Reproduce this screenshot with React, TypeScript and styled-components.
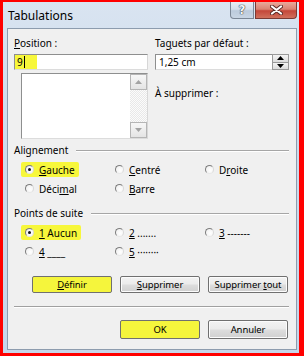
import React from 'react';
import styled, { createGlobalStyle } from 'styled-components';

const Global = createGlobalStyle`
  html, body { margin: 0; padding: 0; }
  body {
    width: 304px; height: 356px; overflow: hidden;
    font-family: "Noto Sans", "DejaVu Sans", sans-serif;
    font-size: 10px; color: #000;
  }
`;

const Outer = styled.div`
  width: 304px; height: 356px; box-sizing: border-box;
  border-style: solid; border-color: #ff0000;
  border-width: 2px 5px 3px 3px;
  background: linear-gradient(180deg, #d9e4f1 0%, #cfdcec 30%, #c6d6ea 100%);
  display: flex; flex-direction: column;
  padding: 0 2px 3px 4px;
`;

const TitleBar = styled.div`
  height: 26px; flex: none;
  display: flex; align-items: flex-start;
`;

const Title = styled.div`
  font-size: 12px; line-height: 16px;
  padding: 6px 0 0 1px; flex: 1;
  color: #000;
`;

const CaptionButtons = styled.div`
  display: flex;
`;

const CaptionButton = styled.div<{ $close?: boolean }>`
  height: 17px;
  width: ${p => (p.$close ? 42 : 24)}px;
  margin-left: ${p => (p.$close ? 1 : 0)}px;
  box-sizing: border-box;
  border: 1px solid ${p => (p.$close ? '#7a3a34' : '#7b8796')};
  border-top: none;
  border-radius: ${p => (p.$close ? '0 0 4px 0' : '0 0 0 4px')};
  background: ${p =>
    p.$close
      ? 'linear-gradient(180deg, #e9a99b 0%, #d98473 45%, #c4473a 55%, #d0705c 100%)'
      : 'linear-gradient(180deg, #e8eef5 0%, #d4dfeb 45%, #bccbdc 55%, #c9d6e4 100%)'};
  display: flex; align-items: center; justify-content: center;
  font-family: "DejaVu Sans", sans-serif; font-weight: bold;
  font-size: 12px;
  color: #f4f6f8;
  text-shadow: 0 0 1px #3a4048, 0 0 1px #3a4048, 0 0 1px #3a4048;
  line-height: 1;
`;

const Panel = styled.div`
  flex: 1;
  box-sizing: border-box;
  border: 1px solid #8d9cae;
  background: #f0f0f0;
  display: flex; flex-direction: column;
  padding: 8px 7px 0 6px;
`;

const TopGrid = styled.div`
  display: grid;
  grid-template-columns: 134px 134px;
  column-gap: 7px;
`;

const Column = styled.div`
  display: flex; flex-direction: column;
`;

const Label = styled.div<{ $gap?: number }>`
  line-height: 13px; height: 13px;
  margin-top: ${p => p.$gap ?? 0}px;
  white-space: nowrap;
`;

const Key = styled.span`
  text-decoration: underline;
  text-underline-offset: 1px;
`;

const TextBox = styled.div`
  margin-top: 4px;
  height: 16px; box-sizing: border-box;
  background: #fff;
  border: 1px solid;
  border-color: #8e8f8f #d7d7d7 #dcdcdc #8e8f8f;
  display: flex; align-items: center;
  line-height: 14px;
`;

const Marked = styled.span`
  background: #f7f73b;
  height: 14px;
  width: 22px;
  display: flex; align-items: center;
  padding-left: 2px; box-sizing: border-box;
`;

const Caret = styled.span`
  width: 1px; height: 12px; background: #000; margin-left: 1px;
`;

const ValueText = styled.span`
  padding-left: 3px; flex: 1;
`;

const Spin = styled.div`
  width: 17px; height: 16px; margin: -1px -1px -1px 0;
  display: flex; flex-direction: column;
`;

const SpinButton = styled.div`
  flex: 1; box-sizing: border-box;
  border: 1px solid #9a9a9a;
  background: linear-gradient(180deg, #f4f4f4, #dcdcdc);
  display: flex; align-items: center; justify-content: center;
  & + & { border-top: none; }
`;

const ListBox = styled.div`
  margin: 3px 0 0 7px;
  height: 66px; box-sizing: border-box;
  background: #fff;
  border: 1px solid;
  border-color: #8e8f8f #d7d7d7 #dcdcdc #8e8f8f;
  display: flex; justify-content: flex-end;
`;

const ScrollBar = styled.div`
  width: 17px;
  display: flex; flex-direction: column; justify-content: space-between;
  background-color: #f3f3f3;
  background-image: repeating-conic-gradient(#e8e8e8 0 25%, #fbfbfb 0 50%);
  background-size: 2px 2px;
`;

const ScrollButton = styled.div`
  height: 16px; box-sizing: border-box;
  border: 1px solid #b5b5b5;
  background: linear-gradient(180deg, #f7f7f7, #e4e4e4);
  display: flex; align-items: center; justify-content: center;
`;

const Group = styled.div<{ $gap: number }>`
  margin-top: ${p => p.$gap}px;
  display: flex; flex-direction: column;
`;

const Legend = styled.div`
  display: flex; align-items: center;
  line-height: 13px; height: 13px;
  &::after {
    content: ""; flex: 1; margin-left: 8px;
    height: 0; border-top: 1px solid #a6a6a6; border-bottom: 1px solid #fff;
  }
`;

const RadioGrid = styled.div`
  margin-top: 3px;
  padding-left: 11px;
  display: grid;
  grid-template-columns: 90px 90px 1fr;
  grid-auto-rows: 19px;
`;

const RadioItem = styled.div<{ $marked?: boolean }>`
  display: flex; align-items: center;
  margin-left: -4px; padding: 0 4px;
  height: 15px; align-self: center;
  justify-self: start;
  background: ${p => (p.$marked ? '#f7f73b' : 'transparent')};
  border-radius: 2px;
  white-space: nowrap;
`;

const RadioCircle = styled.span<{ $on?: boolean }>`
  width: 9px; height: 9px; box-sizing: border-box;
  border-radius: 50%;
  border: 1px solid;
  border-color: #7d7d7d #d8d8d8 #e8e8e8 #7d7d7d;
  background: radial-gradient(circle at 60% 60%, #ffffff 0%, #f2f2f2 70%);
  margin-right: 5px; flex: none;
  display: flex; align-items: center; justify-content: center;
  &::after {
    content: "";
    width: 3px; height: 3px; border-radius: 50%;
    background: ${p => (p.$on ? '#111' : 'transparent')};
  }
`;

const ButtonRow = styled.div<{ $gap: number }>`
  margin-top: ${p => p.$gap}px;
  display: flex; justify-content: flex-end;
  gap: 8px;
  padding-right: 1px;
`;

const Button = styled.div<{ $marked?: boolean; $h?: number }>`
  width: 80px; height: ${p => p.$h ?? 17}px; box-sizing: border-box;
  border: 1px solid #707070; border-radius: 2px;
  background: ${p =>
    p.$marked
      ? '#f5f53c'
      : 'linear-gradient(180deg, #f3f3f3 0%, #ebebeb 48%, #dddddd 52%, #d0d0d0 100%)'};
  box-shadow: ${p => (p.$marked ? 'none' : 'inset 0 0 0 1px #fcfcfc')};
  display: flex; align-items: center; justify-content: center;
  white-space: nowrap;
  font-size: 9.5px;
  letter-spacing: -0.1px;
`;

const Separator = styled.div`
  margin-top: 13px;
  border-top: 1px solid #a0a0a0; border-bottom: 1px solid #fff;
`;

const Up = ({ c = '#000' }: { c?: string }) => (
  <svg width="7" height="4" viewBox="0 0 7 4"><path d="M0 4 L3.5 0 L7 4 Z" fill={c} /></svg>
);
const Down = ({ c = '#000' }: { c?: string }) => (
  <svg width="7" height="4" viewBox="0 0 7 4"><path d="M0 0 L3.5 4 L7 0 Z" fill={c} /></svg>
);

const CloseGlyph = () => (
  <svg width="13" height="10" viewBox="0 0 13 10">
    <path d="M2 1.5 L11 8.5 M11 1.5 L2 8.5" stroke="#5a2a26" strokeWidth="4" strokeLinecap="round" />
    <path d="M2 1.5 L11 8.5 M11 1.5 L2 8.5" stroke="#ffffff" strokeWidth="2.2" strokeLinecap="round" />
  </svg>
);

type Opt = { key: string; rest: string; pre?: string; on?: boolean; marked?: boolean };

const align: Opt[] = [
  { key: 'G', rest: 'auche', on: true, marked: true },
  { key: 'C', rest: 'entré' },
  { pre: 'D', key: 'r', rest: 'oite' },
  { pre: 'Déci', key: 'm', rest: 'al' },
  { key: 'B', rest: 'arre' },
];

const leaders: Opt[] = [
  { key: '1', rest: ' Aucun', on: true, marked: true },
  { key: '2', rest: ' .......' },
  { key: '3', rest: ' -------' },
  { key: '4', rest: ' ____' },
  { key: '5', rest: ' ········' },
];

const Radios = ({ items }: { items: Opt[] }) => (
  <RadioGrid>
    {items.map((o, i) => (
      <RadioItem key={i} $marked={o.marked}>
        <RadioCircle $on={o.on} />
        <span>
          {o.pre}
          <Key>{o.key}</Key>
          {o.rest}
        </span>
      </RadioItem>
    ))}
  </RadioGrid>
);

export default function App() {
  return (
    <>
      <Global />
      <Outer>
        <TitleBar>
          <Title>Tabulations</Title>
          <CaptionButtons>
            <CaptionButton>?</CaptionButton>
            <CaptionButton $close><CloseGlyph /></CaptionButton>
          </CaptionButtons>
        </TitleBar>
        <Panel>
          <TopGrid>
            <Column>
              <Label>
                <Key>P</Key>osition :
              </Label>
              <TextBox>
                <Marked>
                  9<Caret />
                </Marked>
              </TextBox>
              <ListBox>
                <ScrollBar>
                  <ScrollButton><Up c="#a3a3a3" /></ScrollButton>
                  <ScrollButton><Down c="#a3a3a3" /></ScrollButton>
                </ScrollBar>
              </ListBox>
            </Column>
            <Column>
              <Label>
                Ta<Key>g</Key>uets par défaut :
              </Label>
              <TextBox>
                <ValueText>1,25 cm</ValueText>
                <Spin>
                  <SpinButton><Up /></SpinButton>
                  <SpinButton><Down /></SpinButton>
                </Spin>
              </TextBox>
              <Label $gap={17}>À supprimer :</Label>
            </Column>
          </TopGrid>
          <Group $gap={5}>
            <Legend>Alignement</Legend>
            <Radios items={align} />
          </Group>
          <Group $gap={9}>
            <Legend>Points de suite</Legend>
            <Radios items={leaders} />
          </Group>
          <ButtonRow $gap={15}>
            <Button $marked>
              <span><Key>D</Key>éfinir</span>
            </Button>
            <Button>
              <span><Key>S</Key>upprimer</span>
            </Button>
            <Button>
              <span>Supprimer <Key>t</Key>out</span>
            </Button>
          </ButtonRow>
          <Separator />
          <ButtonRow $gap={12}>
            <Button $marked $h={19}>OK</Button>
            <Button $h={19}>Annuler</Button>
          </ButtonRow>
        </Panel>
      </Outer>
    </>
  );
}
